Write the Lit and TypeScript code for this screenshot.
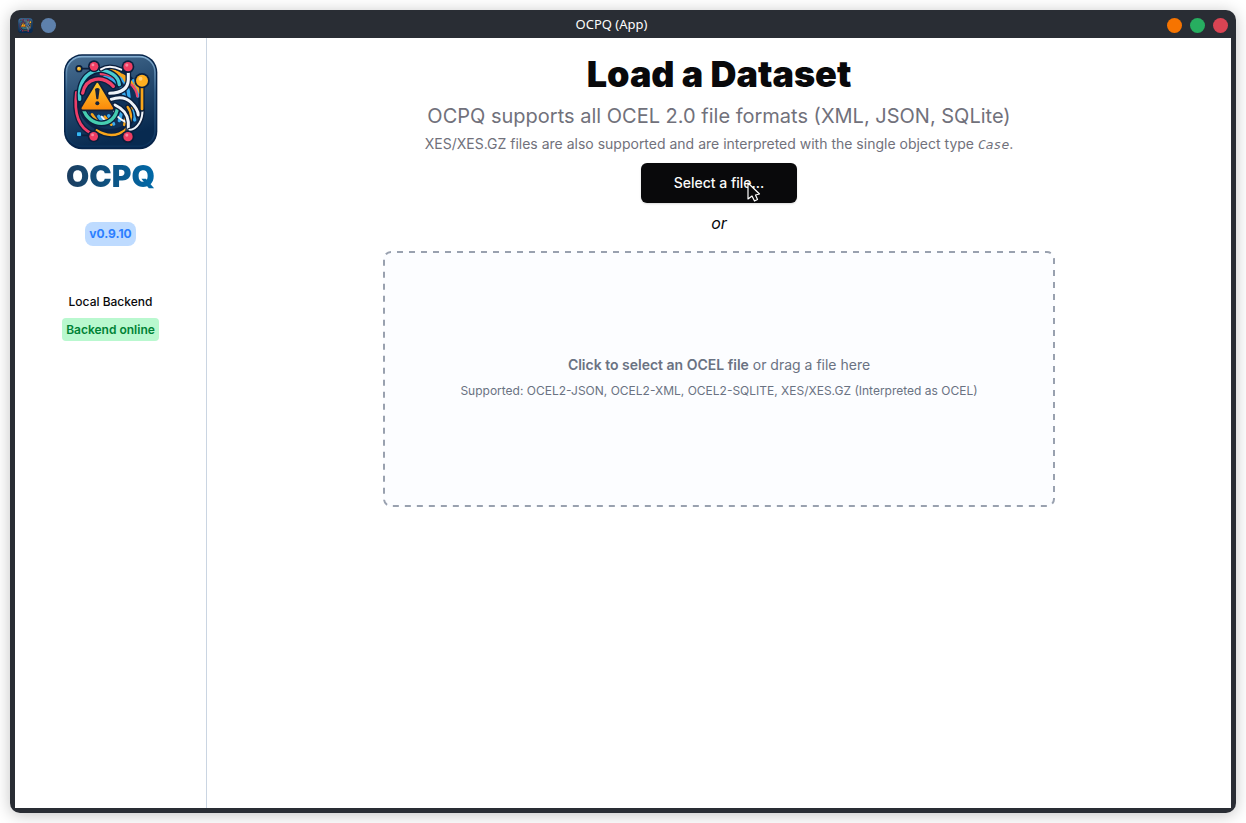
import { LitElement, html, css, svg } from "lit";
import { customElement, property } from "lit/decorators.js";

@customElement("ocpq-logo")
export class OcpqLogo extends LitElement {
  static styles = css`
    :host { display: block; }
    svg { display: block; width: 100%; height: 100%; }
  `;

  render() {
    const node = (x: number, y: number, r: number, fill: string) => svg`
      <circle cx=${x} cy=${y} r=${r + 5} fill="#0a1f3d"/>
      <circle cx=${x} cy=${y} r=${r} fill=${fill}/>
      <circle cx=${x - r / 4} cy=${y - r / 3} r=${r / 3} fill="#fff" opacity=".4"/>`;
    const strand = (d: string, color: string, w: number) => svg`
      <path d=${d} stroke="#0a1f3d" stroke-width=${w + 8}/>
      <path d=${d} stroke=${color} stroke-width=${w}/>`;
    return html`
      <svg viewBox="21 18 288 288" role="img" aria-label="OCPQ logo">
        <defs>
          <linearGradient id="plate" x1="0" y1="0" x2="0.3" y2="1">
            <stop offset="0" stop-color="#4a7093"/>
            <stop offset=".45" stop-color="#284d72"/>
            <stop offset="1" stop-color="#082a50"/>
          </linearGradient>
          <linearGradient id="rim" x1="0" y1="0" x2="0" y2="1">
            <stop offset="0" stop-color="#83add0"/>
            <stop offset=".4" stop-color="#315e87"/>
            <stop offset="1" stop-color="#0b315a"/>
          </linearGradient>
          <linearGradient id="warn" x1="0" y1="0" x2="0" y2="1">
            <stop offset="0" stop-color="#ffc52b"/>
            <stop offset="1" stop-color="#fb8c0c"/>
          </linearGradient>
        </defs>
        <rect x="24" y="19" width="280" height="285" rx="54" fill="#06244a"/>
        <rect x="31" y="26" width="266" height="269" rx="47" fill="url(#plate)" stroke="url(#rim)" stroke-width="5"/>
        <g fill="none" stroke-linecap="round">
          <circle cx="160" cy="156" r="92" fill="#0f3158" stroke="#0b2447" stroke-width="10"/>
          <g stroke="#38a9ed" stroke-width="10">
            <path d="M142 74Q215 75 219 147M145 88Q196 92 207 153M190 218l9-33M213 222l8-38M236 216l-8-35"/>
            <path d="M92 195l12 20M128 205l16 22M158 203l15 25M232 98q14 18 14 46"/>
          </g>
          <g stroke="#f6a51b" stroke-width="8">
            <path d="M151 64Q196 67 211 103M180 76Q220 82 235 120M176 211l12-32M205 231q4-30 23-51M108 199l15 21M146 206l20 24M238 104l14 30"/>
          </g>
          <g stroke="#ef426a" stroke-width="7"><path d="M226 110q14 12 18 35M134 78q39 0 58 29"/></g>
          <g stroke="#f4f6fa" stroke-width="6"><path d="M174 190q11 22 36 32M137 206l13 15"/></g>
          ${strand("M61 133C53 198 68 239 108 257", "#ef3d68", 8)}
          ${strand("M71 154C65 81 122 47 171 79Q188 90 190 110", "#49cbd1", 10)}
          ${strand("M80 135C90 87 140 80 172 115", "#ef426a", 10)}
          ${strand("M81 180C99 242 177 242 185 177", "#45cdb0", 10)}
          ${strand("M122 247C169 276 220 257 225 207Q225 190 215 177", "#f8a61b", 7)}
          ${strand("M135 64Q160 48 196 65", "#f4f6fa", 6)}
          ${strand("M217 62V95C216 127 190 135 161 136", "#eef3f9", 9)}
          ${strand("M165 154Q202 141 224 162T247 201", "#eef3f9", 9)}
          ${strand("M177 171Q214 188 217 222V260", "#eef3f9", 9)}
          ${strand("M259 181C262 216 244 243 220 246", "#eef3f9", 6)}
          ${strand("M258 103V183", "#f8a61b", 8)}
          <path d="M76 62H106M76 262H106" stroke="#0d1f3c" stroke-width="5"/>
        </g>
        ${node(69, 62, 6, "#f9b82c")}
        ${node(114, 55, 13, "#ef3d62")}
        ${node(216, 56, 14, "#ef3d62")}
        ${node(258, 98, 18, "#ffaf20")}
        ${node(113, 265, 13, "#ef3d62")}
        ${node(216, 266, 14, "#ef3d62")}
        <rect x="61" y="250" width="16" height="22" rx="4" fill="#0a315e"/>
        <rect x="63" y="253" width="12" height="11" rx="2" fill="#35b8f4"/>
        <path d="M124 108L168 181H80Z" fill="#15213a" stroke="#15213a" stroke-width="17" stroke-linejoin="round"/>
        <path d="M124 108L168 181H80Z" fill="url(#warn)" stroke="url(#warn)" stroke-width="7" stroke-linejoin="round"/>
        <path d="M117 123q7-6 14 0l-4 29q-3 4-6 0Z" fill="#17233a"/>
        <circle cx="124" cy="166" r="6" fill="#17233a"/>
      </svg>`;
  }
}

@customElement("window-frame")
export class WindowFrame extends LitElement {
  @property() heading = "";

  static styles = css`
    :host {
      display: flex; flex-direction: column; box-sizing: border-box; flex: 1;
      background: #292d34; border-radius: 10px; padding: 0 5px 5px;
      box-shadow: 0 2px 16px rgb(0 0 0 / 24%);
    }
    .bar {
      display: grid; grid-template-columns: auto 1fr auto; align-items: center;
      height: 28px; padding: 2px 3px 0; box-sizing: border-box;
      font: 13px/20px "Noto Sans", sans-serif; color: #fcfcfc;
    }
    .title { padding-bottom: 2px; text-align: center; }
    .side { display: flex; align-items: center; gap: 8px; }
    .icon { width: 15px; height: 15px; }
    .dot { width: 15px; height: 15px; border: 0; padding: 0; border-radius: 50%; }
    .pin { background: #5e81ac; }
    .min { background: #f67400; }
    .max { background: #27ae60; }
    .close { background: #da4453; }
    .body { flex: 1; display: flex; background: #fff; }
  `;

  render() {
    return html`
      <div class="bar">
        <div class="side">
          <ocpq-logo class="icon"></ocpq-logo>
          <button class="dot pin" aria-label="Pin"></button>
        </div>
        <span class="title">${this.heading}</span>
        <div class="side">
          <button class="dot min" aria-label="Minimize"></button>
          <button class="dot max" aria-label="Maximize"></button>
          <button class="dot close" aria-label="Close"></button>
        </div>
      </div>
      <div class="body"><slot></slot></div>`;
  }
}

@customElement("app-root")
export class AppRoot extends LitElement {
  static styles = css`
    :host {
      display: flex; box-sizing: border-box; min-height: 100vh; padding: 10px;
      background: #fff; color: #09090b; font: 16px/24px Inter, sans-serif;
    }
    aside {
      box-sizing: border-box; width: 192px; flex: none; padding-top: 16px;
      border-right: 1px solid #cad5e2;
      display: flex; flex-direction: column; align-items: center;
      font-size: 12px; line-height: 16px;
    }
    .logo { width: 96px; height: 96px; }
    .brand {
      margin-top: 8px; font-size: 30px; line-height: 36px; font-weight: 900;
      color: transparent;
      background: linear-gradient(to right, #1c3d5e, #0069a8);
      background-clip: text; -webkit-background-clip: text;
    }
    .version {
      margin-top: 28px; padding: 4px; border-radius: 8px;
      background: #bedbff; color: #2b7fff; font-weight: 700;
    }
    .backend { margin-top: 48px; font-weight: 500; }
    .status {
      margin-top: 8px; padding: 4px; border-radius: 4px; line-height: 15px;
      background: #b9f8cf; color: #008236; font-weight: 600;
    }
    main {
      flex: 1; padding: 16px; text-align: center;
      display: flex; flex-direction: column; align-items: center;
    }
    h1 { margin: 0; font-size: 36px; line-height: 40px; font-weight: 900; }
    p { margin: 0; }
    .lead { margin-top: 8px; font-size: 20px; line-height: 28px; color: #71717b; }
    .note { margin-top: 4px; font-size: 14px; line-height: 20px; color: #71717b; }
    .note i { font-family: "DejaVu Sans Mono", monospace; font-size: 13px; }
    .select {
      position: relative; margin-top: 8px; height: 40px; padding: 0 33px; border: 0; border-radius: 6px;
      background: #09090b; color: #fafafa; font: 500 14px/20px Inter, sans-serif;
      box-shadow: 0 1px 2px rgb(0 0 0 / 15%);
    }
    .cursor { position: absolute; left: 106px; top: 19px; width: 14px; height: 21px; }
    .or { margin: 8px 0 16px; font-style: italic; }
    .drop {
      position: relative; box-sizing: border-box; width: 100%; max-width: 672px; height: 256px;
      padding: 0 0 4px; border: 0; border-radius: 8px; background: #fcfdff;
      display: flex; flex-direction: column; align-items: center; justify-content: center; gap: 8px;
      color: #6a7282; font-family: inherit; font-size: 14px; line-height: 20px;
    }
    .outline { position: absolute; inset: 0; width: 100%; height: 100%; }
    .outline rect {
      width: calc(100% - 2px); height: calc(100% - 2px); fill: none;
      stroke: #99a1af; stroke-width: 2px; stroke-dasharray: 6 6; stroke-dashoffset: 6px;
    }
    .drop b { font-weight: 600; }
    .hint { font-size: 12px; line-height: 16px; }
  `;

  render() {
    return html`
      <window-frame heading="OCPQ (App)">
        <aside>
          <ocpq-logo class="logo"></ocpq-logo>
          <div class="brand">OCPQ</div>
          <div class="version">v0.9.10</div>
          <div class="backend">Local Backend</div>
          <div class="status">Backend online</div>
        </aside>
        <main>
          <h1>Load a Dataset</h1>
          <p class="lead">OCPQ supports all OCEL 2.0 file formats (XML, JSON, SQLite)</p>
          <p class="note">XES/XES.GZ files are also supported and are interpreted with the single object type <i>Case</i>.</p>
          <button class="select">Select a file...
            <svg class="cursor" viewBox="0 0 14 21" aria-hidden="true">
              <path d="M1 1V17L5 14L7.500 19L10.500 17.500L8.500 13L12.500 12Z" fill="#09090b" stroke="#fff" stroke-width="1.200" stroke-linejoin="round"/>
            </svg>
          </button>
          <p class="or">or</p>
          <button class="drop">
            <svg class="outline" aria-hidden="true"><rect x="1" y="1" rx="7"/></svg>
            <span><b>Click to select an OCEL file</b> or drag a file here</span>
            <span class="hint">Supported: OCEL2-JSON, OCEL2-XML, OCEL2-SQLITE, XES/XES.GZ (Interpreted as OCEL)</span>
          </button>
        </main>
      </window-frame>`;
  }
}
